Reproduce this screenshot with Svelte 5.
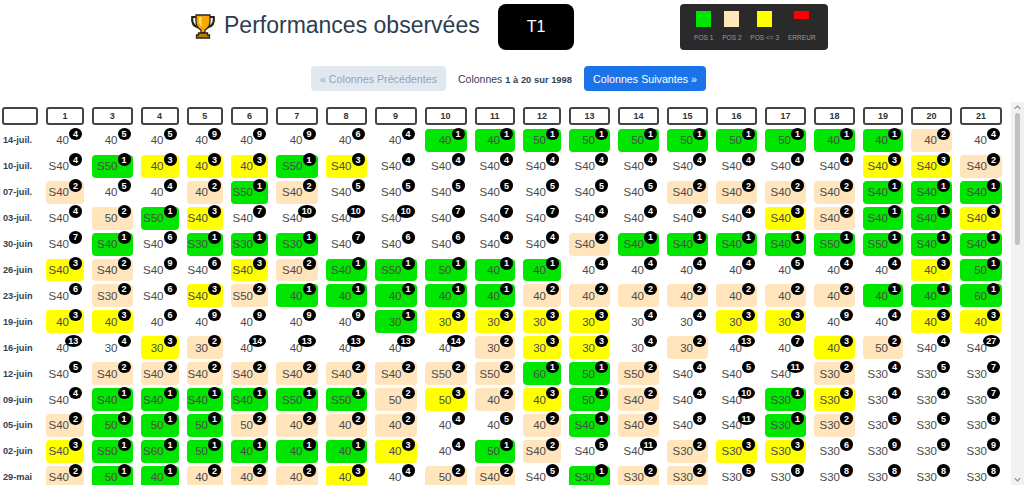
<script lang="ts">
	const columns = [1, 3, 4, 5, 6, 7, 8, 9, 10, 11, 12, 13, 14, 15, 16, 17, 18, 19, 20, 21];

	/** Each cell is "label/rank", the rank sets the colour */
	const rows = [
		['14-juil.', '40/4 40/5 40/5 40/9 40/9 40/9 40/6 40/4 40/1 40/1 50/1 50/1 50/1 50/1 50/1 50/1 40/1 40/1 40/2 40/4'],
		['10-juil.', 'S40/4 S50/1 40/3 40/3 40/3 S50/1 S40/3 S40/4 S40/4 S40/4 S40/4 S40/4 S40/4 S40/4 S40/4 S40/4 S40/4 S40/3 S40/3 S40/2'],
		['07-juil.', 'S40/2 40/5 40/4 40/2 S50/1 S40/2 S40/5 S40/5 S40/5 S40/5 S40/5 S40/5 S40/5 S40/2 S40/2 S40/2 S40/2 S40/1 S40/1 S40/1'],
		['03-juil.', 'S40/4 50/2 S50/1 S40/3 S40/7 S40/10 S40/10 S40/10 S40/7 S40/7 S40/7 S40/4 S40/4 S40/4 S40/4 S40/3 S40/2 S40/1 S40/1 S40/3'],
		['30-juin', 'S40/7 S40/1 S40/6 S30/1 S30/1 S30/1 S40/7 S40/6 S40/6 S40/4 S40/4 S40/2 S40/1 S40/1 S40/1 S40/1 S50/1 S50/1 S40/1 S40/1'],
		['26-juin', 'S40/3 S40/2 S40/9 S40/6 S40/3 S40/2 S40/1 S50/1 50/1 40/1 40/1 40/4 40/4 40/4 40/4 40/5 40/4 40/4 40/3 50/1'],
		['23-juin', 'S40/6 S30/2 S40/6 S40/3 S50/2 40/1 40/1 40/1 40/1 40/1 40/2 40/2 40/2 40/2 40/2 40/2 40/2 40/1 40/1 60/1'],
		['19-juin', '40/3 40/3 40/6 40/9 40/9 40/9 40/9 30/1 30/3 30/3 30/3 30/3 30/4 30/4 30/3 30/3 40/9 40/4 40/3 40/3'],
		['16-juin', '40/13 30/4 30/3 30/2 40/14 40/13 40/13 40/13 40/14 30/2 30/3 30/3 30/4 30/2 40/13 40/7 40/3 50/2 S40/4 S40/27'],
		['12-juin', 'S40/5 S40/2 S40/2 S40/2 S40/2 S40/2 S40/2 S40/2 S50/2 S50/2 60/1 50/1 S50/2 S40/4 S40/5 S40/11 S30/2 S30/4 S30/5 S30/7'],
		['09-juin', 'S40/4 S40/1 S40/1 S40/1 S40/1 S50/1 S50/1 50/2 50/3 40/2 40/3 50/1 S40/2 S40/4 S40/10 S30/1 S30/3 S30/4 S30/4 S30/7'],
		['05-juin', 'S40/2 50/1 50/1 50/1 50/2 40/2 40/2 40/2 40/4 40/5 40/2 S40/1 S40/2 S40/8 S40/11 S30/1 S30/2 S30/5 S30/5 S30/8'],
		['02-juin', 'S40/3 S50/1 S60/1 50/1 40/1 40/1 40/1 40/3 40/4 50/1 S40/2 S40/5 S40/11 S30/2 S30/3 S30/3 S30/6 S30/9 S30/9 S30/9'],
		['29-mai', 'S40/2 50/1 40/1 40/2 40/2 40/2 40/3 40/4 50/2 S40/2 S40/5 S30/1 S30/2 S30/2 S30/5 S30/8 S30/8 S30/8 S30/8 S30/8']
	].map(([date, cells]) => ({
		date,
		cells: cells.split(' ').map((c) => {
			const [label, rank] = c.split('/');
			return { label, rank: Number(rank) };
		})
	}));

	const legend = [
		{ name: 'POS 1', cls: 'green' },
		{ name: 'POS 2', cls: 'peach' },
		{ name: 'POS <= 3', cls: 'yellow' },
		{ name: 'ERREUR', cls: 'red' }
	];

	function rankClass(rank: number) {
		if (rank === 1) return 'green';
		if (rank === 2) return 'peach';
		if (rank === 3) return 'yellow';
		return '';
	}
</script>

<div class="page">
	<header class="top">
		<h1 class="title">
			<svg class="trophy" viewBox="0 0 26 26" width="26" height="26" aria-hidden="true">
				<path d="M6 4H2.2C1.600 9.500 4 13.500 8.500 14.500M20 4h3.800c.6 5.500-1.800 9.500-6.300 10.500" fill="none" stroke="#2a2418" stroke-width="2.200" />
				<path d="M6 2h14v6c0 5-3 8-5 9v3h-4v-3c-2-1-5-4-5-9z" fill="#f5a800" stroke="#2a2418" stroke-width="1.300" />
				<path d="M9 4h2.500v6c0 1.500.5 3 1 4-2-1-3.500-3-3.500-6z" fill="#ffdf6a" />
				<path d="M8.500 20h9v2h2v3h-13v-3h2z" fill="#c07c10" stroke="#2a2418" stroke-width="1.300" />
			</svg>
			Performances observées
		</h1>
		<div class="tour">T1</div>
		<div class="legend">
			{#each legend as item}
				<div class="legend-item">
					<span class="swatch {item.cls}"></span>
					<span class="legend-name">{item.name}</span>
				</div>
			{/each}
		</div>
	</header>

	<nav class="pager">
		<button class="prev" disabled>« Colonnes Précédentes</button>
		<span class="range">Colonnes <strong>1 à 20 sur 1998</strong></span>
		<button class="next">Colonnes Suivantes »</button>
	</nav>

	<div class="scroller">
		<div class="grid">
			<div class="head"></div>
			{#each columns as col}
				<div class="head">{col}</div>
			{/each}
			{#each rows as row}
				<div class="date">{row.date}</div>
				{#each row.cells as cell}
					<div class="cell {rankClass(cell.rank)}">
						{cell.label}<span class="badge" class:wide={cell.rank > 9}>{cell.rank}</span>
					</div>
				{/each}
			{/each}
		</div>
		<div class="scrollbar">
			<svg viewBox="0 0 10 6" width="7" height="5" aria-hidden="true"><path d="M1 5l4-4 4 4" fill="none" stroke="#8a8a8a" stroke-width="1.6" /></svg>
			<div class="thumb"></div>
			<svg class="down" viewBox="0 0 10 6" width="7" height="5" aria-hidden="true"><path d="M1 1l4 4 4-4" fill="none" stroke="#8a8a8a" stroke-width="1.6" /></svg>
		</div>
	</div>
</div>

<style>
	:global(body) {
		background: #fff;
		font-family: 'Liberation Sans', Arial, sans-serif;
	}
	.page {
		width: 1024px;
		height: 493px;
		overflow: hidden;
	}
	.top {
		display: flex;
		align-items: flex-start;
		height: 50px;
		padding: 4px 0 0 190px;
		box-sizing: border-box;
	}
	.title {
		display: flex;
		align-items: center;
		gap: 8px;
		width: 289px;
		margin: 8px 19px 0 0;
		font-size: 23px;
		font-weight: 400;
		color: #2c3e50;
		white-space: nowrap;
	}
	.trophy {
		flex: none;
	}
	.tour {
		display: flex;
		align-items: center;
		justify-content: center;
		width: 76px;
		height: 46px;
		margin-right: 106px;
		background: #000;
		border-radius: 8px;
		color: #fff;
		font-size: 16px;
	}
	.legend {
		display: flex;
		gap: 8.7px;
		width: 148px;
		height: 46px;
		padding: 7px 0 0 14px;
		box-sizing: border-box;
		background: #2a2a2a;
		border-radius: 4px;
	}
	.legend-item {
		display: flex;
		flex-direction: column;
		align-items: center;
		justify-content: space-between;
		height: 29.5px;
	}
	.swatch {
		width: 15px;
		height: 16px;
	}
	.swatch.red {
		height: 8px;
		margin-bottom: 8px;
		background: #ff0000;
	}
	.legend-name {
		font-size: 6.6px;
		color: #9a9a9a;
		white-space: nowrap;
	}
	.pager {
		display: flex;
		justify-content: center;
		align-items: center;
		gap: 12px;
		height: 25px;
		margin: 16px 0 0 -7px;
	}
	button {
		height: 25px;
		border: 0;
		border-radius: 4px;
		font-family: inherit;
		font-size: 10.7px;
	}
	.prev {
		width: 135px;
		background: #e2e8f0;
		color: #94a3b8;
	}
	.next {
		width: 122px;
		background: #1a73e8;
		color: #fff;
	}
	.range {
		font-size: 10.5px;
		color: #374151;
	}
	.range strong {
		font-size: 9.4px;
	}
	.scroller {
		display: flex;
		justify-content: space-between;
		height: 383px;
		margin-top: 11px;
		overflow: hidden;
	}
	.grid {
		display: grid;
		grid-template-columns: 36px 38px 40.5px 38px 36.5px 37px 41.500px 41px 42px 42px 40.5px 38px 41px 41px 41px 41px 41px 41px 40px 41px 42px;
		grid-template-rows: 19px;
		grid-auto-rows: 22.92px;
		column-gap: 8px;
		row-gap: 3px;
		align-content: start;
		padding: 5px 0 0 2px;
	}
	.head {
		display: flex;
		align-items: center;
		justify-content: center;
		margin-bottom: 1px;
		border: 2px solid #444;
		border-radius: 3px;
		box-sizing: border-box;
		font-size: 9px;
		font-weight: 700;
		color: #333;
	}
	.date {
		display: flex;
		align-items: center;
		padding-left: 1px;
		font-size: 9.2px;
		font-weight: 700;
		color: #374151;
		white-space: nowrap;
	}
	.cell {
		position: relative;
		display: flex;
		align-items: center;
		justify-content: flex-end;
		padding-right: 15px;
		border-radius: 4px;
		font-size: 11.5px;
		color: #4b4b4b;
	}
	.green {
		background: #00e600;
	}
	.peach {
		background: #ffe4bc;
	}
	.yellow {
		background: #ffff00;
	}
	.badge {
		position: absolute;
		top: -1.5px;
		right: 2px;
		display: flex;
		align-items: center;
		justify-content: center;
		width: 13px;
		height: 12.5px;
		border-radius: 50%;
		background: #000;
		color: #fff;
		font-size: 9px;
		font-weight: 700;
	}
	.badge.wide {
		width: 17.5px;
	}
	.scrollbar {
		display: flex;
		flex-direction: column;
		align-items: center;
		width: 13px;
		padding-top: 3px;
		background: #f1f1f1;
	}
	.thumb {
		width: 5px;
		height: 132px;
		margin-top: 3px;
		border-radius: 3px;
		background: #c1c1c1;
	}
	.down {
		margin-top: auto;
		margin-bottom: 3px;
	}
</style>
